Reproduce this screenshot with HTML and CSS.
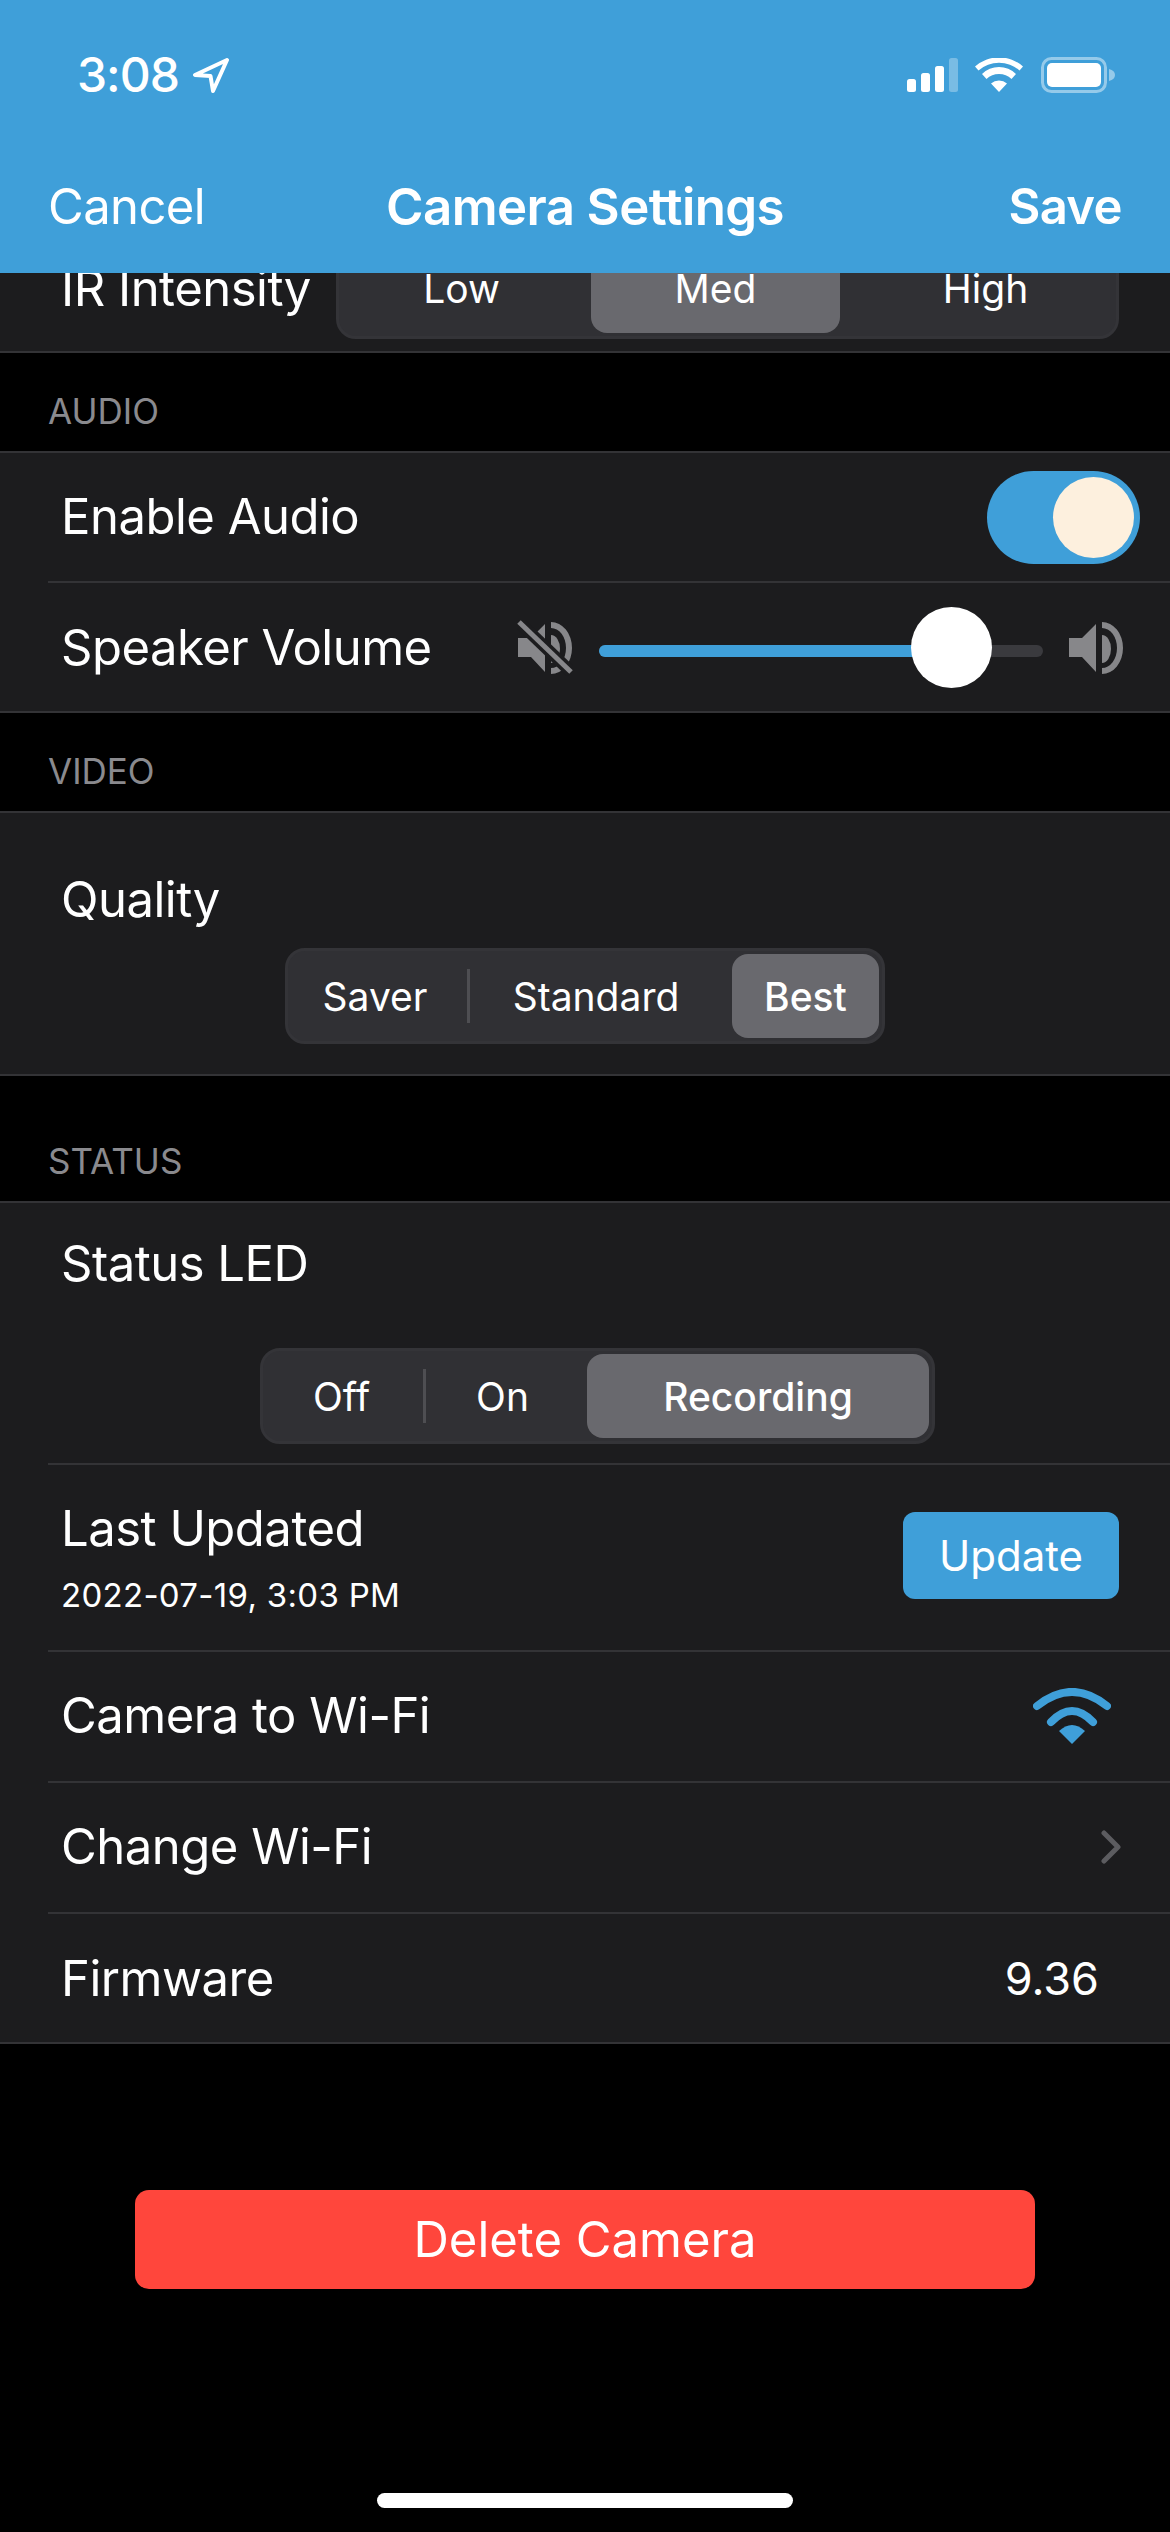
FILE: index.html
```html
<!DOCTYPE html>
<html lang="en">
<head>
<meta charset="utf-8">
<title>Camera Settings</title>
<link rel="stylesheet" href="styles.css">
</head>
<body>
<div class="phone">
  <header class="topbar">
    <div class="status">
      <div class="status-left">
        <span class="time">3:08</span>
        <svg class="loc" viewBox="0 0 38 35"><path d="M35 2 L3 17 L18.5 18 L21 33 Z" fill="none" stroke="#fff" stroke-width="4" stroke-linejoin="round"/></svg>
      </div>
      <div class="status-right">
        <svg class="sig" viewBox="0 0 51 34"><rect x="0" y="21" width="9" height="13" rx="2.5" fill="#fff"/><rect x="14" y="15" width="9" height="19" rx="2.5" fill="#fff"/><rect x="28" y="8" width="9" height="26" rx="2.5" fill="#fff"/><rect x="42" y="0" width="9" height="34" rx="2.5" fill="#fff" opacity=".3"/></svg>
        <svg class="wifi-s" viewBox="0 0 48 34"><path d="M24 34 L16 25.5 A12 12 0 0 1 32 25.5 Z M11.5 21 L7 16 A24 24 0 0 1 41 16 L36.5 21 A18 18 0 0 0 11.5 21 Z M3.5 12.5 L0 8.500 A36 36 0 0 1 48 8.500 L44.500 12.500 A31 31 0 0 0 3.500 12.500 Z" fill="#fff"/></svg>
        <svg class="batt" viewBox="0 0 74 36"><rect x="1.500" y="1.500" width="63" height="33" rx="9" fill="none" stroke="#fff" stroke-opacity=".45" stroke-width="3"/><rect x="6" y="6" width="54" height="24" rx="5" fill="#fff"/><path d="M68 12 C72 13 74 15 74 18 C74 21 72 23 68 24 Z" fill="#fff" fill-opacity=".45"/></svg>
      </div>
    </div>
    <nav class="navbar">
      <span class="nav-side">Cancel</span>
      <span class="nav-title">Camera Settings</span>
      <span class="nav-side nav-save">Save</span>
    </nav>
  </header>

  <main class="content">
    <div class="group clipped">
      <div class="row row-ir">
        <span class="label">IR Intensity</span>
        <div class="seg seg-ir">
          <span class="opt opt-low">Low</span>
          <span class="opt opt-med sel">Med</span>
          <span class="opt opt-high">High</span>
        </div>
      </div>
    </div>

    <h2 class="section">AUDIO</h2>
    <div class="group">
      <div class="row row-first">
        <span class="label">Enable Audio</span>
        <div class="toggle"><span class="knob"></span></div>
      </div>
      <div class="row">
        <span class="label label-speaker">Speaker Volume</span>
        <div class="volume">
          <svg class="vol-icon" viewBox="0 0 56 56"><path d="M1 18 H14 L28 4 V52 L14 37 H1 Z" fill="#87878a"/><path d="M34 15 A9 14 0 0 1 34 43 Z" fill="#87878a"/><path d="M34 2 A21 26 0 0 1 34 54 L34 48 A15 20 0 0 0 34 8 Z" fill="#87878a"/><path d="M2 2 L54 52" stroke="#1c1c1e" stroke-width="12"/><path d="M2 2 L54 52" stroke="#87878a" stroke-width="5"/></svg>
          <div class="track"><div class="track-fill"></div><span class="thumb"></span></div>
          <svg class="vol-icon" viewBox="0 0 56 56"><path d="M1 18 H14 L28 4 V52 L14 37 H1 Z" fill="#87878a"/><path d="M34 15 A9 14 0 0 1 34 43 Z" fill="#87878a"/><path d="M34 2 A21 26 0 0 1 34 54 L34 48 A15 20 0 0 0 34 8 Z" fill="#87878a"/></svg>
        </div>
      </div>
    </div>

    <h2 class="section">VIDEO</h2>
    <div class="group">
      <div class="stack stack-quality">
        <span class="label">Quality</span>
        <div class="seg seg-q">
          <span class="opt q-saver">Saver</span><i class="div"></i>
          <span class="opt q-std">Standard</span>
          <span class="opt q-best sel">Best</span>
        </div>
      </div>
    </div>

    <h2 class="section section-status">STATUS</h2>
    <div class="group">
      <div class="stack stack-led">
        <span class="label">Status LED</span>
        <div class="seg seg-led">
          <span class="opt l-off">Off</span><i class="div"></i>
          <span class="opt l-on">On</span>
          <span class="opt l-rec sel">Recording</span>
        </div>
      </div>
      <div class="row row-updated">
        <div class="updated">
          <span class="label">Last Updated</span>
          <span class="sub">2022-07-19, 3:03 PM</span>
        </div>
        <span class="btn-update">Update</span>
      </div>
      <div class="row row-tall">
        <span class="label">Camera to Wi-Fi</span>
        <svg class="wifi" viewBox="0 0 78 56"><path d="M39 56 L26 43 Q39 31 52 43 Z" fill="#3f9fd9"/><path d="M18 34 Q39 12 60 34" fill="none" stroke="#3f9fd9" stroke-width="8" stroke-linecap="round"/><path d="M4 18 Q39 -10 74 18" fill="none" stroke="#3f9fd9" stroke-width="8" stroke-linecap="round"/></svg>
      </div>
      <div class="row row-tall">
        <span class="label">Change Wi-Fi</span>
        <svg class="chev" viewBox="0 0 20 34"><path d="M3 3 L17 17 L3 31" fill="none" stroke="#5c5c60" stroke-width="5" stroke-linecap="round" stroke-linejoin="round"/></svg>
      </div>
      <div class="row row-fw">
        <span class="label">Firmware</span>
        <span class="fw">9.36</span>
      </div>
    </div>

    <div class="delete-wrap"><span class="btn-delete">Delete Camera</span></div>
  </main>
  <div class="home"><span class="home-bar"></span></div>
</div>
</body>
</html>
```

FILE: styles.css
```css
* { box-sizing: border-box; }
html, body { margin: 0; padding: 0; background: #000; }
body { font-family: Inter, "Liberation Sans", sans-serif; color: #fff; }
.phone { width: 1170px; height: 2532px; display: flex; flex-direction: column; overflow: hidden; background: #000; }

.topbar { height: 273px; flex: none; background: #3f9fd9; padding: 56px 48px 0; }
.status { height: 38px; display: flex; justify-content: space-between; align-items: center; padding: 0 7px 0 29px; }
.status-left { display: flex; align-items: center; gap: 13px; }
.time { font-size: 48px; font-weight: 500; letter-spacing: -1px; line-height: 38px; }
.loc { width: 38px; height: 35px; }
.status-right { display: flex; align-items: center; }
.sig { width: 51px; height: 34px; margin-right: 17px; }
.wifi-s { width: 48px; height: 34px; margin-right: 18px; }
.batt { width: 74px; height: 36px; }
.navbar { display: grid; grid-template-columns: 1fr auto 1fr; align-items: center; margin-top: 82px; height: 54px; }
.nav-side { font-size: 49px; font-weight: 400; letter-spacing: -.6px; }
.nav-title { font-size: 51px; font-weight: 600; letter-spacing: -.6px; }
.nav-save { font-weight: 600; justify-self: end; }

.content { flex: 1; display: flex; flex-direction: column; }
.section { margin: 0; height: 98px; padding: 0 48px 18px; display: flex; align-items: flex-end; font-size: 35px; line-height: 44px; font-weight: 400; color: #8a8a8e; }
.section-status { height: 125px; }
.group { background: #1c1c1e; border-bottom: 2px solid #333336; border-top: 2px solid #333336; }
.clipped { border-top: 0; height: 80px; flex: none; overflow: hidden; display: flex; align-items: flex-end; }
.clipped .row { flex: 1; }
.row { height: 130px; display: flex; justify-content: space-between; align-items: center; padding: 0 51px 0 61px; }
.row-first { height: 128px; }
.row-tall { height: 131px; }
.row + .row, .stack + .row { background: linear-gradient(#333336, #333336) 48px 0 / 100% 2px no-repeat; }
.label { font-size: 49px; font-weight: 400; letter-spacing: -.5px; line-height: 60px; }
.label-speaker { margin-top: 3px; }

.seg { display: flex; align-items: center; height: 96px; background: #303034; border: 3px solid #343438; border-radius: 20px; padding: 3px; font-size: 39px; }
.opt { height: 84px; display: flex; align-items: center; justify-content: center; border-radius: 16px; }
.sel { background: #69696e; font-weight: 500; }
.div { display: block; width: 3px; height: 54px; background: #4e4e52; flex: none; }

.row-ir { height: 129px; flex: none; padding-top: 4px; }
.seg-ir { width: 783px; align-self: flex-end; margin-bottom: 12px; }
.seg-ir .opt { padding-bottom: 5px; }
.opt-low { width: 249px; padding-right: 10px; }
.opt-med { width: 249px; }
.opt-high { flex: 1; padding-left: 18px; }
.opt-med.sel { font-weight: 400; }

.volume { display: flex; align-items: center; margin: 4px -5px 0 0; }
.vol-icon { width: 56px; height: 56px; flex: none; }
.track { width: 444px; height: 12px; border-radius: 6px; background: #3a3a3e; margin: 6px 25px 0 26px; position: relative; }
.track-fill { width: 340px; height: 12px; border-radius: 6px; background: #3f9fd9; }
.thumb { position: absolute; left: 312px; top: -38px; width: 81px; height: 81px; border-radius: 50%; background: #fff; }
.toggle { width: 153px; height: 93px; border-radius: 47px; background: #3f9fd9; padding: 6px; display: flex; justify-content: flex-end; margin-right: -21px; }
.knob { width: 81px; height: 81px; border-radius: 50%; background: #fdf0de; }

.stack { display: flex; flex-direction: column; }
.stack .label { margin-left: 61px; }
.stack-quality { height: 261px; padding-top: 57px; }
.stack-quality .seg { margin: 18px 0 0 285px; width: 600px; }
.q-saver { width: 176px; padding-right: 8px; }
.q-std { flex: 1; padding-right: 10px; }
.q-best { width: 147px; }
.stack-led { height: 260px; padding-top: 31px; }
.stack-led .seg { margin: 54px 0 0 260px; width: 675px; }
.l-off { width: 157px; padding-right: 6px; }
.l-on { flex: 1; padding-right: 8px; }
.l-rec { width: 342px; }

.row-updated { height: 187px; }
.updated { display: flex; flex-direction: column; }
.sub { font-size: 33px; letter-spacing: .3px; line-height: 40px; margin-top: 16px; }
.btn-update { width: 216px; height: 87px; border-radius: 12px; background: #3f9fd9; display: flex; align-items: center; justify-content: center; font-size: 42px; margin-top: -2px; }
.wifi { width: 78px; height: 56px; margin-right: 8px; }
.chev { width: 20px; height: 34px; margin-right: -2px; }
.row-fw { padding-top: 3px; }
.fw { font-size: 45px; margin-right: 20px; }

.delete-wrap { flex: 1; display: flex; justify-content: center; padding-top: 146px; }
.btn-delete { width: 900px; height: 99px; border-radius: 14px; background: #ff463c; display: flex; align-items: center; justify-content: center; font-size: 49px; }
.home { height: 39px; flex: none; display: flex; justify-content: center; }
.home-bar { width: 416px; height: 15px; border-radius: 8px; background: #fff; }
```
